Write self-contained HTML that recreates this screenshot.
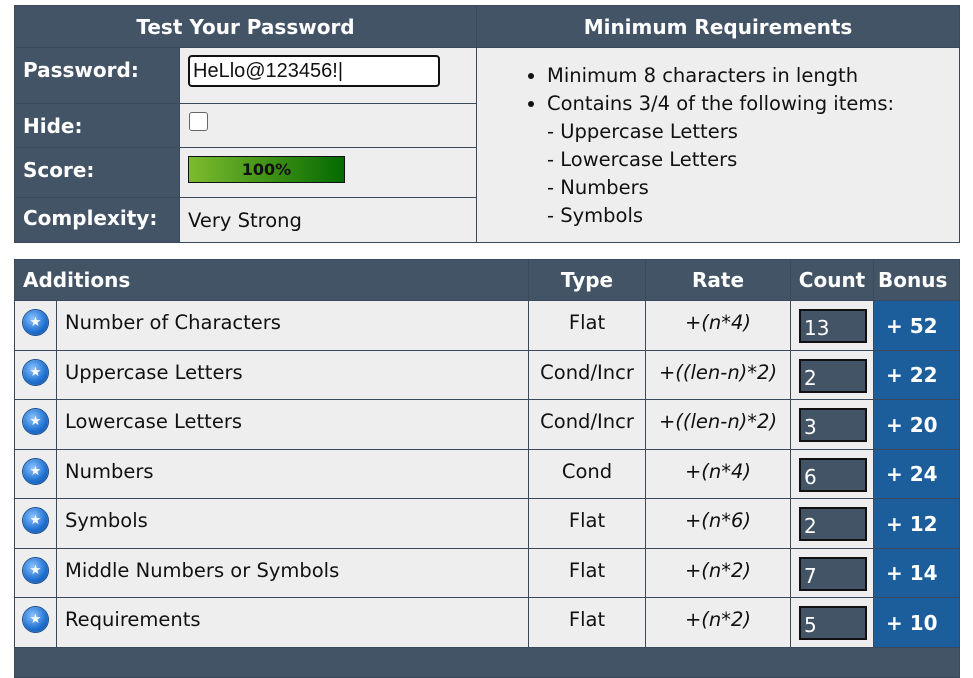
<!DOCTYPE html>
<html><head><style>
body{margin:0;background:#fff;font-family:"DejaVu Sans",Verdana,sans-serif;font-size:19.5px;color:#111}
table{border-collapse:collapse;position:absolute;left:14px;table-layout:fixed}
td,th{border:1px solid #3a4a5c;padding:0}
th{background:#435466;color:#fff;font-weight:bold;font-size:20px}
.l{background:#435466;color:#fff;font-weight:bold;padding-left:8px;vertical-align:top;padding-top:10px;font-size:20px}
.c{background:#eee}
.ic{width:25px;height:25px;border-radius:50%;background:radial-gradient(circle at 40% 35%,#8cc4ff,#1f6fcf 60%,#134f9e);margin:auto;color:#fff;font-size:13px;line-height:25px;text-align:center;box-shadow:0 0 0 1px #1a4f8e}
.cnt{width:68px;height:34px;background:#435466;border:2px solid #111;box-sizing:border-box;color:#fff;font-size:20px;line-height:34px;padding-left:3px;margin:8px 0 0 8px}
.b{background:#1c5d9c;color:#fff;font-weight:bold;font-size:20px;padding-left:12px}
i{font-style:italic}
.t{vertical-align:top;padding-top:10px}
</style></head><body>
<table style="top:5px;width:945px">
<col style="width:165px"><col style="width:297px"><col style="width:483px">
<tr style="height:42px"><th colspan="2">Test Your Password</th><th>Minimum Requirements</th></tr>
<tr style="height:56px"><td class="l">Password:</td><td class="c" style="vertical-align:top;padding-top:7px"><div style="margin-left:8px;width:252px;height:32px;border:2px solid #111;border-radius:4px;background:#fff;box-sizing:border-box;font-family:'Liberation Sans',Arial,sans-serif;font-size:20px;line-height:28px;padding-left:3px">HeLlo@123456!|</div></td>
<td class="c" rowspan="4" style="vertical-align:top;padding-top:14px"><ul style="margin:0;padding-left:70px;line-height:28px"><li>Minimum 8 characters in length</li><li>Contains 3/4 of the following items:<br>- Uppercase Letters<br>- Lowercase Letters<br>- Numbers<br>- Symbols</li></ul></td></tr>
<tr style="height:44px"><td class="l">Hide:</td><td class="c" style="vertical-align:top;padding-top:8px"><div style="margin-left:9px;width:17px;height:17px;border:1px solid #666;border-radius:3px;background:#fff"></div></td></tr>
<tr style="height:50px"><td class="l">Score:</td><td class="c" style="vertical-align:top;padding-top:8px"><div style="margin-left:8px;width:157px;height:27px;border:1px solid #111;box-sizing:border-box;background:linear-gradient(90deg,#7dbb2e,#046a00);text-align:center;font-weight:bold;font-size:16px;line-height:25px">100%</div></td></tr>
<tr style="height:45px"><td class="l" style="padding-top:8px">Complexity:</td><td class="c" style="padding-left:8px">Very Strong</td></tr>
</table>
<table style="top:259px;width:945px">
<col style="width:42px"><col style="width:472px"><col style="width:117px"><col style="width:145px"><col style="width:83px"><col style="width:86px">
<tr style="height:41px"><th colspan="2" style="text-align:left;padding-left:8px">Additions</th><th>Type</th><th>Rate</th><th>Count</th><th style="text-align:left;padding-left:4px">Bonus</th></tr>
<tr style="height:50px"><td class="c" style="vertical-align:top;padding-top:9px"><div class="ic">★</div></td><td class="c t" style="padding-left:8px">Number of Characters</td><td class="c t" style="text-align:center">Flat</td><td class="c t" style="text-align:center"><i>+(n*4)</i></td><td class="c" style="vertical-align:top"><div class="cnt">13</div></td><td class="b">+ 52</td></tr>
<tr style="height:49px"><td class="c" style="vertical-align:top;padding-top:9px"><div class="ic">★</div></td><td class="c t" style="padding-left:8px">Uppercase Letters</td><td class="c t" style="text-align:center">Cond/Incr</td><td class="c t" style="text-align:center"><i>+((len-n)*2)</i></td><td class="c" style="vertical-align:top"><div class="cnt">2</div></td><td class="b">+ 22</td></tr>
<tr style="height:50px"><td class="c" style="vertical-align:top;padding-top:9px"><div class="ic">★</div></td><td class="c t" style="padding-left:8px">Lowercase Letters</td><td class="c t" style="text-align:center">Cond/Incr</td><td class="c t" style="text-align:center"><i>+((len-n)*2)</i></td><td class="c" style="vertical-align:top"><div class="cnt">3</div></td><td class="b">+ 20</td></tr>
<tr style="height:49px"><td class="c" style="vertical-align:top;padding-top:9px"><div class="ic">★</div></td><td class="c t" style="padding-left:8px">Numbers</td><td class="c t" style="text-align:center">Cond</td><td class="c t" style="text-align:center"><i>+(n*4)</i></td><td class="c" style="vertical-align:top"><div class="cnt">6</div></td><td class="b">+ 24</td></tr>
<tr style="height:50px"><td class="c" style="vertical-align:top;padding-top:9px"><div class="ic">★</div></td><td class="c t" style="padding-left:8px">Symbols</td><td class="c t" style="text-align:center">Flat</td><td class="c t" style="text-align:center"><i>+(n*6)</i></td><td class="c" style="vertical-align:top"><div class="cnt">2</div></td><td class="b">+ 12</td></tr>
<tr style="height:49px"><td class="c" style="vertical-align:top;padding-top:9px"><div class="ic">★</div></td><td class="c t" style="padding-left:8px">Middle Numbers or Symbols</td><td class="c t" style="text-align:center">Flat</td><td class="c t" style="text-align:center"><i>+(n*2)</i></td><td class="c" style="vertical-align:top"><div class="cnt">7</div></td><td class="b">+ 14</td></tr>
<tr style="height:50px"><td class="c" style="vertical-align:top;padding-top:9px"><div class="ic">★</div></td><td class="c t" style="padding-left:8px">Requirements</td><td class="c t" style="text-align:center">Flat</td><td class="c t" style="text-align:center"><i>+(n*2)</i></td><td class="c" style="vertical-align:top"><div class="cnt">5</div></td><td class="b">+ 10</td></tr>
<tr style="height:30px"><th colspan="6"></th></tr>
</table>
</body></html>
